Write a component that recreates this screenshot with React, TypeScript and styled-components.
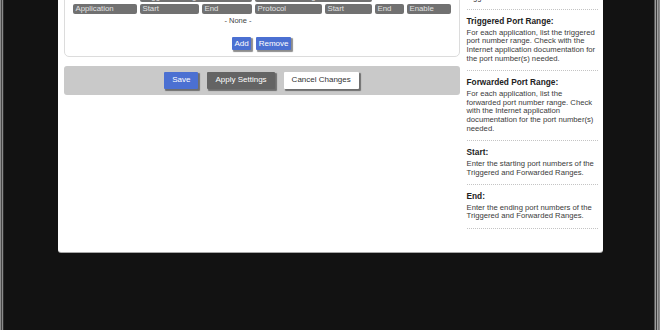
import React from 'react';
import styled, { createGlobalStyle } from 'styled-components';

const GlobalStyle = createGlobalStyle`
    html, body {
        margin: 0;
        padding: 0;
        background: #121212;
        overflow: hidden;
    }
    body {
        font-family: "Liberation Sans", "DejaVu Sans", sans-serif;
    }
`;

const Screen = styled.div`
    width: 660px;
    height: 330px;
    overflow: hidden;
    background: #121212;
    box-shadow: inset 1px 0 #8c8c8c, inset 2px 0 #474747, inset 3px 0 #8a8a8a,
        inset 4px 0 #2c2c2c, inset -1px 0 #8a8a8a, inset -2px 0 #777,
        inset -3px 0 #a2a2a2, inset -4px 0 #3c3c3c, inset -5px 0 #9a9a9a,
        inset -6px 0 #555;
`;

const Panel = styled.div`
    width: 545px;
    height: 292px;
    box-sizing: border-box;
    margin: -40px auto 0;
    padding: 0 5px 0 6px;
    background: #fff;
    border-radius: 0 0 3px 3px;
    box-shadow: 0 1px 0 #a8a8a8;
    display: grid;
    grid-template-columns: 396px 131px;
    column-gap: 7px;
    align-items: start;
`;

const MainColumn = styled.div`
    padding-top: 6px;
`;

const TableBox = styled.div`
    border: 1px solid #dcdcdc;
    border-radius: 5px;
    padding: 25px 8px 6px;
`;

const PortTable = styled.div`
    display: grid;
    grid-template-columns: 64px 59px 50px 67px 47px 29px 44px;
    column-gap: 3px;
    row-gap: 2px;
`;

const HeadCell = styled.div<{ $row: number; $span?: string }>`
    grid-row: ${p => p.$row};
    grid-column: ${p => p.$span || 'auto'};
    height: 10px;
    line-height: 10px;
    padding-left: 3px;
    background: #717171;
    color: #e2e2e2;
    font-size: 7.8px;
    border-radius: 2px;
    white-space: nowrap;
    overflow: hidden;
`;

const EmptyRow = styled.div`
    grid-row: 3;
    grid-column: 1 / 7;
    height: 10px;
    line-height: 10px;
    text-align: center;
    font-size: 7.5px;
    color: #444;
`;

const TableButtons = styled.div`
    display: flex;
    justify-content: center;
    gap: 5px;
    margin-top: 11px;
`;

const Button = styled.button<{ $kind?: 'blue' | 'gray' | 'white'; $small?: boolean }>`
    height: ${p => (p.$small ? '13px' : '16.5px')};
    padding: ${p => (p.$small ? '0 2.5px' : '0 8px')};
    border: 0;
    border-radius: 1px;
    font-family: "Liberation Sans", sans-serif;
    font-size: 8px;
    line-height: 1;
    cursor: pointer;
    background: ${p =>
        p.$kind === 'gray' ? '#646464' : p.$kind === 'white' ? '#fff' : '#4b70d2'};
    color: ${p => (p.$kind === 'white' ? '#333' : '#fff')};
    box-shadow: 1.5px 1.5px 1px rgba(0, 0, 0, 0.45);
`;

const ButtonBar = styled.div`
    margin-top: 9px;
    height: 29px;
    background: #c9c9c9;
    border-radius: 3px;
    display: flex;
    align-items: flex-start;
    justify-content: center;
    gap: 9px;
    padding-top: 6px;
    box-sizing: border-box;
`;

const HelpColumn = styled.div`
    padding-top: 6.3px;
`;

const HelpSection = styled.div`
    padding: 6px 0 6.5px;
    border-bottom: 1px dotted #c4c4c4;
`;

const HelpTitle = styled.div`
    font-size: 8.3px;
    font-weight: bold;
    line-height: 10px;
    color: #222;
    white-space: nowrap;
`;

const HelpText = styled.div`
    margin-top: 2.6px;
    font-size: 7.7px;
    line-height: 8.8px;
    color: #3a3a3a;
    white-space: nowrap;
`;

interface HelpItem {
    title: string;
    lines: string[];
}

const helpItems: HelpItem[] = [
    { title: 'Application Name:', lines: ['Enter the application name of the', 'trigger.'] },
    {
        title: 'Triggered Port Range:',
        lines: [
            'For each application, list the triggered',
            'port number range. Check with the',
            'Internet application documentation for',
            'the port number(s) needed.',
        ],
    },
    {
        title: 'Forwarded Port Range:',
        lines: [
            'For each application, list the',
            'forwarded port number range. Check',
            'with the Internet application',
            'documentation for the port number(s)',
            'needed.',
        ],
    },
    {
        title: 'Start:',
        lines: ['Enter the starting port numbers of the', 'Triggered and Forwarded Ranges.'],
    },
    {
        title: 'End:',
        lines: ['Enter the ending port numbers of the', 'Triggered and Forwarded Ranges.'],
    },
];

const columns = ['Application', 'Start', 'End', 'Protocol', 'Start', 'End', 'Enable'];

const App = () => {
    return (
        <>
            <GlobalStyle />
            <Screen>
                <Panel>
                    <MainColumn>
                        <TableBox>
                            <PortTable>
                                <HeadCell $row={1} $span="2 / 4">Triggered Range</HeadCell>
                                <HeadCell $row={1} $span="4 / 6">Forwarded Range</HeadCell>
                                {columns.map((c, i) => (
                                    <HeadCell key={i} $row={2} $span={`${i + 1}`}>
                                        {c}
                                    </HeadCell>
                                ))}
                                <EmptyRow>- None -</EmptyRow>
                            </PortTable>
                            <TableButtons>
                                <Button $small>Add</Button>
                                <Button $small>Remove</Button>
                            </TableButtons>
                        </TableBox>
                        <ButtonBar>
                            <Button>Save</Button>
                            <Button $kind="gray">Apply Settings</Button>
                            <Button $kind="white">Cancel Changes</Button>
                        </ButtonBar>
                    </MainColumn>
                    <HelpColumn>
                        {helpItems.map(item => (
                            <HelpSection key={item.title}>
                                <HelpTitle>{item.title}</HelpTitle>
                                <HelpText>
                                    {item.lines.map((l, i) => (
                                        <div key={i}>{l}</div>
                                    ))}
                                </HelpText>
                            </HelpSection>
                        ))}
                    </HelpColumn>
                </Panel>
            </Screen>
        </>
    );
};

export default App;
